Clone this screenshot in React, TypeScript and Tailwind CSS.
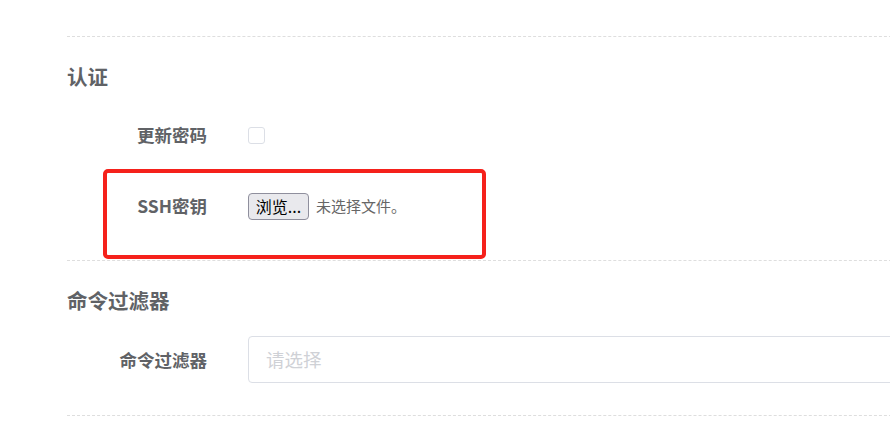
import React from 'react'

const FONT = '"Noto Sans CJK SC", "Noto Sans", "Liberation Sans", sans-serif'

function Divider() {
  return <div className="border-t border-dashed border-[#dedede]" />
}

function FormRow({ label, children }: { label: string; children: React.ReactNode }) {
  return (
    <div className="flex items-center">
      <div className="w-[181px] shrink-0 pr-[41px] text-right text-[17.5px] font-bold text-[#606266] leading-[40px]">
        {label}
      </div>
      <div className="flex flex-1 items-center min-h-[40px]">{children}</div>
    </div>
  )
}

export default function App() {
  return (
    <div className="w-full h-[436px] overflow-hidden bg-white" style={{ fontFamily: FONT }}>
      <div className="w-[840px] ml-[67px] pt-[36px]">
        <Divider />

        {/* 认证 */}
        <h2 className="mt-[25px] text-[20.5px] font-bold leading-[28px] text-[#606266]">认证</h2>

        <div className="mt-[25px]">
          <FormRow label="更新密码">
            <span className="block w-[17px] h-[17px] rounded-[3px] border border-[#dcdfe6] bg-white" />
          </FormRow>
        </div>

        <div className="relative mt-[31px]">
          <FormRow label="SSH密钥">
            <button
              type="button"
              className="h-[27px] w-[61px] rounded-[4px] border border-[#8f8f9d] bg-[#e9e9ed] text-[16px] leading-none text-black"
            >
              浏览...
            </button>
            <span className="ml-[7px] text-[15px] text-[#666666]">未选择文件。</span>
          </FormRow>
          {/* highlight annotation */}
          <div className="pointer-events-none absolute left-[36px] top-[-17px] w-[383px] h-[90px] rounded-[5px] border-4 border-[#f5211b]" />
        </div>

        <div className="mt-[34px]">
          <Divider />
        </div>

        {/* 命令过滤器 */}
        <h2 className="mt-[25px] text-[20.5px] font-bold leading-[28px] text-[#606266]">命令过滤器</h2>

        <div className="mt-[22px]">
          <FormRow label="命令过滤器">
            <div className="flex flex-1 h-[47px] items-center rounded-[4px] border border-[#dcdfe6] pl-[17px] text-[18.5px] text-[#cfd1d6]">
              请选择
            </div>
          </FormRow>
        </div>

        <div className="mt-[32px]">
          <Divider />
        </div>
      </div>
    </div>
  )
}
